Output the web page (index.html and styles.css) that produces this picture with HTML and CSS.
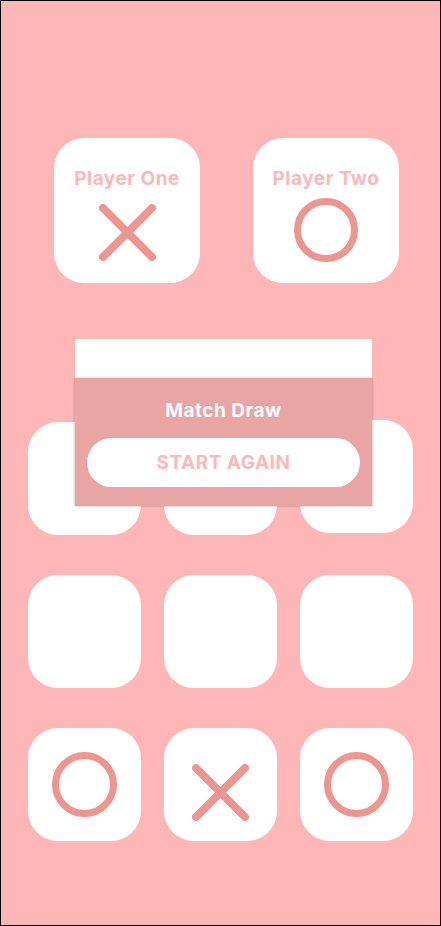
FILE: index.html
```html
<!DOCTYPE html>
<html>
<head>
<meta charset="utf-8">
<link rel="stylesheet" href="styles.css">
</head>
<body>
<div class="screen">
  <div class="players">
    <div class="card">
      <div class="card-title">Player One</div>
      <svg class="icon-x card-x" width="57" height="57" viewBox="0 0 57 57"><path d="M4 4L53 53M53 4L4 53" stroke="#EE9590" stroke-width="8" stroke-linecap="round" fill="none"/></svg>
    </div>
    <div class="card">
      <div class="card-title">Player Two</div>
      <svg class="icon-o card-o" width="64" height="64" viewBox="0 0 64 64"><circle cx="32" cy="32" r="28.5" stroke="#EE9590" stroke-width="7" fill="none"/></svg>
    </div>
  </div>
  <div class="board">
    <div class="cell"></div>
    <div class="cell"></div>
    <div class="cell cell-up"></div>
    <div class="cell"></div>
    <div class="cell"></div>
    <div class="cell"></div>
    <div class="cell">
      <svg width="65" height="65" viewBox="0 0 65 65"><circle cx="32.5" cy="32.5" r="29" stroke="#EE9590" stroke-width="7" fill="none"/></svg>
    </div>
    <div class="cell">
      <svg class="cell-x" width="57" height="57" viewBox="0 0 57 57"><path d="M4 4L53 53M53 4L4 53" stroke="#EE9590" stroke-width="8" stroke-linecap="round" fill="none"/></svg>
    </div>
    <div class="cell">
      <svg width="65" height="65" viewBox="0 0 65 65"><circle cx="32.5" cy="32.5" r="29" stroke="#EE9590" stroke-width="7" fill="none"/></svg>
    </div>
  </div>
  <div class="modal">
    <div class="modal-head"></div>
    <div class="modal-body">
      <div class="modal-title">Match Draw</div>
      <div class="btn">START AGAIN</div>
    </div>
  </div>
</div>
</body>
</html>
```
FILE: styles.css
```css
html, body {
  margin: 0;
  padding: 0;
  width: 441px;
  height: 926px;
  overflow: hidden;
}
body {
  font-family: Inter, "Noto Sans", sans-serif;
}
.screen {
  position: relative;
  box-sizing: border-box;
  width: 441px;
  height: 926px;
  border: 1px solid #000;
  background: #FEB6B6;
  padding-top: 137px;
}
.players {
  display: flex;
  gap: 53px;
  padding-left: 53px;
}
.card {
  width: 146px;
  height: 145px;
  background: #fff;
  border-radius: 30px;
  display: flex;
  flex-direction: column;
  align-items: center;
  box-sizing: border-box;
  padding-top: 30px;
}
.card-title {
  font-size: 19px;
  line-height: 22px;
  font-weight: 700;
  letter-spacing: 0.5px;
  color: #FFB7B7;
}
.card-x {
  margin-top: 14px;
}
.card-o {
  margin-top: 8px;
  margin-left: -1px;
}
.board {
  margin-top: 139px;
  padding-left: 27px;
  display: grid;
  grid-template-columns: repeat(3, 113px);
  grid-auto-rows: 113px;
  column-gap: 23px;
  row-gap: 40px;
}
.cell {
  background: #fff;
  border-radius: 30px;
  display: flex;
  align-items: center;
  justify-content: center;
}
.cell-up {
  transform: translateY(-2px);
}
.cell-x {
  margin-top: 16px;
}
.modal {
  position: absolute;
  left: 74px;
  top: 338px;
  width: 297px;
}
.modal-head {
  height: 39px;
  background: #fff;
}
.modal-body {
  height: 128px;
  background: #E8A5A4;
  box-sizing: border-box;
  padding: 22px 12px 0;
  box-shadow: 1px 0 2px rgba(120, 60, 60, 0.25), -1px 0 2px rgba(120, 60, 60, 0.25);
  display: flex;
  flex-direction: column;
  align-items: stretch;
}
.modal-title {
  text-align: center;
  color: #fff;
  font-size: 19px;
  line-height: 22px;
  font-weight: 700;
  letter-spacing: 0.5px;
}
.btn {
  margin-top: 16px;
  height: 49px;
  border-radius: 25px;
  background: #fff;
  color: #FFB7B7;
  font-size: 19px;
  font-weight: 700;
  letter-spacing: 0.5px;
  display: flex;
  align-items: center;
  justify-content: center;
}
```
